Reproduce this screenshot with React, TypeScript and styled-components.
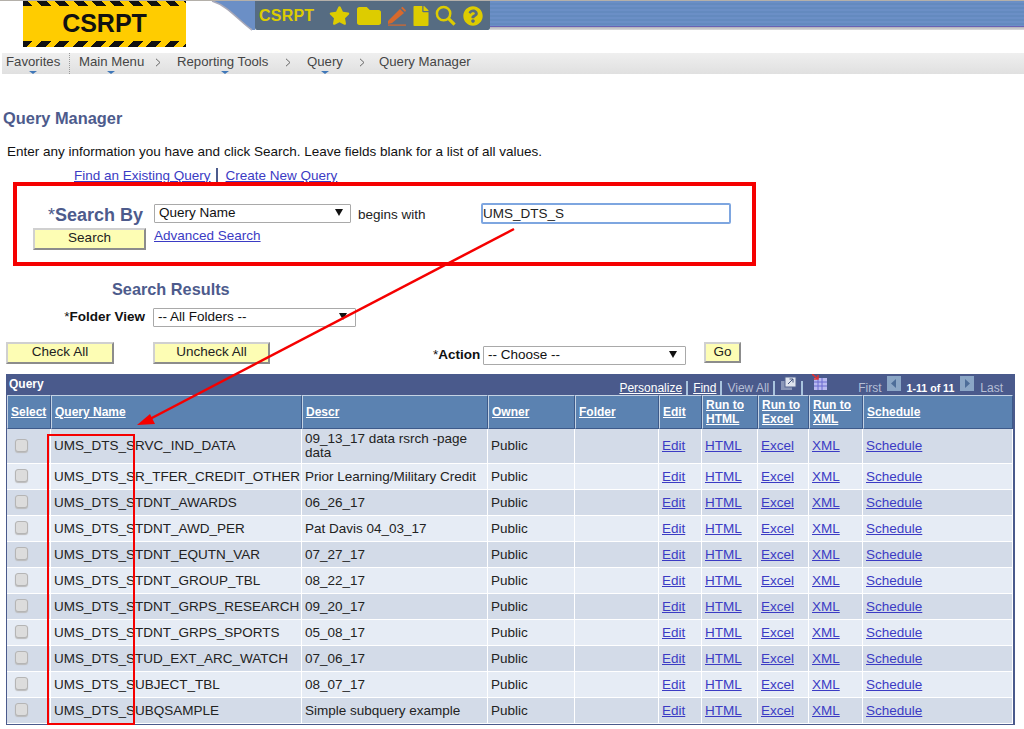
import React from 'react'
import styled, { createGlobalStyle } from 'styled-components'
import { FaStar, FaFolder, FaFile, FaQuestionCircle } from 'react-icons/fa'

const GlobalStyle = createGlobalStyle`
  html, body {
    margin: 0;
    padding: 0;
    background: #fff;
    font-family: "Liberation Sans", Arial, sans-serif;
    overflow: hidden;
  }
`

const Page = styled.div`
  position: relative;
  width: 1024px;
  height: 729px;
  box-sizing: border-box;
  border-top: 1px solid #b4b0aa;
  overflow: hidden;
`

const Header = styled.div`
  display: flex;
  align-items: flex-start;
  height: 46px;
  padding-left: 23px;
`

const Logo = styled.div`
  width: 163px;
  height: 46px;
  flex: none;
  display: flex;
  flex-direction: column;
  background: #ffcc00;
  &::before {
    content: '';
    height: 5px;
    flex: none;
    background: repeating-linear-gradient(45deg, #111 0 7px, #ffcc00 7px 13px);
  }
  &::after {
    content: '';
    height: 6px;
    flex: none;
    background: repeating-linear-gradient(135deg, #111 0 7px, #ffcc00 7px 13px);
  }
`

const LogoText = styled.div`
  flex: 1;
  display: flex;
  align-items: center;
  justify-content: center;
  font-size: 25px;
  font-weight: bold;
  color: #111;
`

const Swoosh = styled.svg`
  width: 69px;
  height: 30px;
  flex: none;
  display: block;
`

const Toolbar = styled.div`
  width: 235px;
  height: 29px;
  flex: none;
  display: flex;
  align-items: center;
  background: #566c82;
  border-radius: 0 0 2px 2px;
  padding-left: 4px;
  box-sizing: border-box;
  color: #ddcc00;
`

const ToolbarName = styled.span`
  font-size: 16px;
  font-weight: bold;
  width: 68px;
  flex: none;
  letter-spacing: 0.2px;
`

const ToolIcon = styled.span<{ $w: number; $color?: string }>`
  width: ${({ $w }) => $w}px;
  flex: none;
  display: flex;
  justify-content: center;
  align-items: center;
  color: ${({ $color }) => $color || '#ddcc00'};
`

const Band = styled.div`
  flex: 1;
  height: 29px;
  background:
    linear-gradient(to bottom, transparent 0 25px, #6a62b4 25px 26px, #b0b0b8 26px, #dcdcdc 29px),
    repeating-linear-gradient(to bottom, #6b8fc6 0 2px, #648abf 2px 4px);
`

const NavBar = styled.div`
  display: flex;
  align-items: center;
  height: 21px;
  margin: 6px 0 0 2px;
  background: linear-gradient(to bottom, #efefef, #e0e0e0);
  font-size: 13.2px;
  color: #454545;
`

const NavItem = styled.span<{ $w: number; $pad: number; $arrow?: number; $divider?: boolean }>`
  position: relative;
  display: flex;
  align-items: center;
  height: 100%;
  width: ${({ $w }) => $w}px;
  box-sizing: border-box;
  padding: 0 5px 5px ${({ $pad }) => $pad}px;
  flex: none;
  white-space: nowrap;
  ${({ $divider }) => $divider && 'border-right: 1px dotted #999;'}
  ${({ $arrow }) =>
    $arrow !== undefined &&
    `&::after {
      content: '';
      position: absolute;
      bottom: 0;
      left: ${$arrow}px;
      border-left: 4px solid transparent;
      border-right: 4px solid transparent;
      border-top: 3px solid #3f77b8;
    }`}
`

const NavChevron = styled.svg`
  margin-left: auto;
  margin-top: 3px;
  flex: none;
`

const Title = styled.h1`
  margin: 34px 0 0 3px;
  height: 20px;
  line-height: 20px;
  font-size: 16.4px;
  font-weight: bold;
  color: #4d5b8c;
`

const Instruction = styled.p`
  margin: 16px 0 0 7px;
  height: 16px;
  line-height: 16px;
  font-size: 13.5px;
  color: #111;
`

const LinkRow = styled.div`
  display: flex;
  align-items: center;
  height: 16px;
  margin: 7px 0 0 74px;
  font-size: 13.5px;
  color: #333;
`

const TextLink = styled.a`
  color: #3b3bc4;
  text-decoration: underline;
`

const AdvancedLink = styled(TextLink)`
  margin: 0 0 8px 8px;
  font-size: 13.5px;
`

const Pipe = styled.span`
  width: 2px;
  height: 14px;
  margin: 0 8px 0 5px;
  background: #4d5b8c;
`

const Row = styled.div<{ $top: number; $h: number; $align?: string }>`
  display: flex;
  align-items: ${({ $align }) => $align || 'center'};
  height: ${({ $h }) => $h}px;
  margin-top: ${({ $top }) => $top}px;
`

const SearchLabel = styled.label`
  width: 143px;
  margin-right: 11px;
  text-align: right;
  font-size: 18px;
  font-weight: bold;
  color: #4d5b8c;
  padding-top: 2px;
  white-space: nowrap;
  & > i {
    font-style: normal;
    font-weight: normal;
  }
`

const SelectWrap = styled.div<{ $w: number; $top?: number; $arrowRight?: number }>`
  position: relative;
  width: ${({ $w }) => $w}px;
  height: 19px;
  margin-top: ${({ $top }) => $top || 0}px;
  flex: none;
  &::after {
    content: '';
    position: absolute;
    top: 6px;
    right: ${({ $arrowRight }) => $arrowRight || 8}px;
    border-left: 4px solid transparent;
    border-right: 4px solid transparent;
    border-top: 7px solid #111;
    pointer-events: none;
  }
`

const Select = styled.select`
  appearance: none;
  width: 100%;
  height: 100%;
  box-sizing: border-box;
  border: 1px solid #a9a9a9;
  border-radius: 1px;
  background: #fff;
  padding: 0 0 2px 4px;
  font-family: "Liberation Sans", Arial, sans-serif;
  font-size: 13.5px;
  color: #111;
`

const BeginsWith = styled.span`
  width: 123px;
  margin-left: 7px;
  font-size: 13.5px;
  color: #222;
  padding-top: 4px;
`

const TextInput = styled.input`
  width: 250px;
  height: 21px;
  box-sizing: border-box;
  border: 2px solid #7ea6e0;
  border-radius: 2px;
  padding: 0 0 1px 0;
  font-family: "Liberation Sans", Arial, sans-serif;
  font-size: 13.5px;
  color: #222;
  outline: none;
`

const Button = styled.button<{ $w: number; $ml: number; $h?: number }>`
  width: ${({ $w }) => $w}px;
  height: ${({ $h }) => $h || 22}px;
  margin-left: ${({ $ml }) => $ml}px;
  flex: none;
  box-sizing: border-box;
  padding: 0 0 3px;
  background: #fdfdb4;
  border-style: solid;
  border-width: 2px;
  border-color: #d0d0d0 #8c8c8c #8c8c8c #d0d0d0;
  font-family: "Liberation Sans", Arial, sans-serif;
  font-size: 13.5px;
  color: #222;
`

const SubTitle = styled.h2`
  margin: 29px 0 0 112px;
  height: 20px;
  line-height: 20px;
  font-size: 16.3px;
  font-weight: bold;
  color: #4d5b8c;
`

const FieldLabel = styled.label<{ $w: number; $mr: number; $ml?: number; $top?: number }>`
  width: ${({ $w }) => $w}px;
  margin-right: ${({ $mr }) => $mr}px;
  margin-left: ${({ $ml }) => $ml || 0}px;
  padding-top: ${({ $top }) => $top || 0}px;
  flex: none;
  text-align: right;
  font-size: 13.5px;
  font-weight: bold;
  color: #111;
  white-space: nowrap;
  & > i {
    font-style: normal;
    font-weight: normal;
  }
`

const Frame = styled.div`
  width: 1009px;
  margin: 10px 0 0 6px;
  box-sizing: border-box;
  border: 1px solid #4a5a8c;
  border-top: 0;
  border-right-width: 2px;
`

const TitleBar = styled.div`
  display: flex;
  align-items: flex-end;
  height: 21px;
  background: #4a5a8c;
  color: #fff;
  font-size: 12px;
`

const TitleName = styled.span`
  font-weight: bold;
  padding: 0 0 4px 2px;
`

const PagerGroup = styled.div`
  margin-left: auto;
  display: flex;
  align-items: flex-end;
  padding: 0 10px 0 0;
  height: 100%;
  box-sizing: border-box;
`

const PagerLink = styled.a`
  color: #fff;
  text-decoration: underline;
`

const PagerMuted = styled.span<{ $ml?: number }>`
  color: #b6bfd6;
  margin-left: ${({ $ml }) => $ml || 0}px;
`

const PagerPipe = styled.span`
  width: 2px;
  height: 14px;
  margin: 0 5px 0 4px;
  background: #a9c4de;
  flex: none;
`

const PagerIcon = styled.svg<{ $ml?: number }>`
  flex: none;
  display: block;
  margin: 0 0 4px ${({ $ml }) => $ml || 0}px;
`

const PagerCount = styled.b`
  margin: 0 6px;
  color: #fff;
  font-size: 10.6px;
  line-height: 14px;
`

const Grid = styled.table`
  width: 1006px;
  table-layout: fixed;
  border-collapse: separate;
  border-spacing: 0;
  font-size: 13.5px;
`

const Head = styled.th`
  height: 34px;
  padding: 0 0 0 3px;
  box-sizing: border-box;
  background: #5b82b1;
  border-top: 1px solid #c5d3e4;
  border-left: 1px solid #c5d3e4;
  border-right: 1px solid #3d5a8a;
  border-bottom: 1px solid #3d5a8a;
  text-align: left;
  vertical-align: middle;
  font-size: 12px;
  line-height: 14px;
  font-weight: bold;
`

const HeadLink = styled.a`
  color: #fff;
  text-decoration: underline;
`

const DataRow = styled.tr<{ $odd: boolean; $h: number }>`
  height: ${({ $h }) => $h}px;
  background: ${({ $odd }) => ($odd ? '#d3dbe8' : '#e6ecf5')};
`

const Cell = styled.td`
  padding: 0 2px 0 3px;
  box-sizing: border-box;
  border-right: 1px solid #fff;
  border-bottom: 1px solid #fff;
  vertical-align: middle;
  color: #222;
  line-height: 14px;
`

const NameCell = styled(Cell)`
  white-space: nowrap;
`

const Check = styled.input.attrs({ type: 'checkbox', disabled: true })`
  appearance: none;
  display: block;
  width: 13px;
  height: 13px;
  margin: 0 0 2px 5px;
  box-sizing: border-box;
  border: 1px solid #b5b5b5;
  border-radius: 3px;
  background: #dcdcdc;
  box-shadow: 0 1px 1px #bbb;
`

const RowLink = styled.a`
  color: #3b3bc4;
  text-decoration: underline;
`

const RedBox = styled.div<{ $x: number; $y: number; $w: number; $h: number; $b: number }>`
  position: absolute;
  left: ${({ $x }) => $x}px;
  top: ${({ $y }) => $y}px;
  width: ${({ $w }) => $w}px;
  height: ${({ $h }) => $h}px;
  box-sizing: border-box;
  border: ${({ $b }) => $b}px solid #f50000;
  pointer-events: none;
`

const ArrowLayer = styled.svg`
  position: absolute;
  left: 0;
  top: -1px;
  pointer-events: none;
`

const columns = [44, 251, 186, 87, 84, 43, 56, 51, 54, 150]

const headers: React.ReactNode[] = [
  'Select',
  'Query Name',
  'Descr',
  'Owner',
  'Folder',
  'Edit',
  <>Run to<br />HTML</>,
  <>Run to<br />Excel</>,
  <>Run to<br />XML</>,
  'Schedule',
]

const rows = [
  ['UMS_DTS_SRVC_IND_DATA', '09_13_17 data rsrch -page data'],
  ['UMS_DTS_SR_TFER_CREDIT_OTHER', 'Prior Learning/Military Credit'],
  ['UMS_DTS_STDNT_AWARDS', '06_26_17'],
  ['UMS_DTS_STDNT_AWD_PER', 'Pat Davis 04_03_17'],
  ['UMS_DTS_STDNT_EQUTN_VAR', '07_27_17'],
  ['UMS_DTS_STDNT_GROUP_TBL', '08_22_17'],
  ['UMS_DTS_STDNT_GRPS_RESEARCH', '09_20_17'],
  ['UMS_DTS_STDNT_GRPS_SPORTS', '05_08_17'],
  ['UMS_DTS_STUD_EXT_ARC_WATCH', '07_06_17'],
  ['UMS_DTS_SUBJECT_TBL', '08_07_17'],
  ['UMS_DTS_SUBQSAMPLE', 'Simple subquery example'],
]

const Chevron = () => (
  <NavChevron width="6" height="9" viewBox="0 0 6 9">
    <path d="M1 .8L5 4.5L1 8.2" fill="none" stroke="#666" strokeWidth="1" />
  </NavChevron>
)

const App: React.FC = () => (
  <Page>
    <GlobalStyle />
    <Header>
      <Logo>
        <LogoText>CSRPT</LogoText>
      </Logo>
      <Swoosh viewBox="0 0 69 30">
        <path d="M26 0C42 5 52 19 66 29H69V0Z" fill="#6b8fc6" />
        <path d="M26 0C42 5 52 19 66 29" fill="none" stroke="#a9a9b8" strokeWidth="1.6" />
      </Swoosh>
      <Toolbar>
        <ToolbarName>CSRPT</ToolbarName>
        <ToolIcon $w={25}><FaStar size={21} /></ToolIcon>
        <ToolIcon $w={33}><FaFolder size={24} /></ToolIcon>
        <ToolIcon $w={23} $color="#d8692c">
          <svg width="20" height="20" viewBox="0 0 20 20">
            <path d="M1 15L13 3L17 7L5 17L1 18Z" fill="currentColor" />
            <path d="M14 2L15.5 .8L19 4.5L18 6Z" fill="currentColor" />
            <rect x="1" y="18.5" width="18" height="1.2" fill="currentColor" />
          </svg>
        </ToolIcon>
        <ToolIcon $w={25}><FaFile size={20} /></ToolIcon>
        <ToolIcon $w={24}>
          <svg width="21" height="21" viewBox="0 0 22 22" fill="none" stroke="currentColor">
            <circle cx="9" cy="9" r="7" strokeWidth="2.6" />
            <path d="M14 14L20.5 20.5" strokeWidth="3.4" />
          </svg>
        </ToolIcon>
        <ToolIcon $w={32}><FaQuestionCircle size={20} /></ToolIcon>
      </Toolbar>
      <Band />
    </Header>

    <NavBar>
      <NavItem $w={68} $pad={4} $arrow={27} $divider>Favorites</NavItem>
      <NavItem $w={96} $pad={9} $arrow={37}>Main Menu<Chevron /></NavItem>
      <NavItem $w={130} $pad={11} $arrow={55}>Reporting Tools<Chevron /></NavItem>
      <NavItem $w={74} $pad={11} $arrow={25}>Query<Chevron /></NavItem>
      <NavItem $w={120} $pad={9}>Query Manager</NavItem>
    </NavBar>

    <Title>Query Manager</Title>
    <Instruction>Enter any information you have and click Search. Leave fields blank for a list of all values.</Instruction>
    <LinkRow>
      <TextLink>Find an Existing Query</TextLink>
      <Pipe />
      <TextLink>Create New Query</TextLink>
    </LinkRow>

    <Row $top={20} $h={21} $align="flex-start">
      <SearchLabel><i>*</i>Search By</SearchLabel>
      <SelectWrap $w={197}>
        <Select defaultValue="name"><option value="name">Query Name</option></Select>
      </SelectWrap>
      <BeginsWith>begins with</BeginsWith>
      <TextInput defaultValue="UMS_DTS_S" />
    </Row>
    <Row $top={4} $h={22}>
      <Button $w={113} $ml={33}>Search</Button>
      <AdvancedLink>Advanced Search</AdvancedLink>
    </Row>

    <SubTitle>Search Results</SubTitle>
    <Row $top={8} $h={19}>
      <FieldLabel $w={145} $mr={8}><i>*</i>Folder View</FieldLabel>
      <SelectWrap $w={203} $arrowRight={9}>
        <Select defaultValue="all"><option value="all">-- All Folders --</option></Select>
      </SelectWrap>
    </Row>

    <Row $top={16} $h={22} $align="flex-start">
      <Button $w={108} $ml={6}>Check All</Button>
      <Button $w={117} $ml={39}>Uncheck All</Button>
      <FieldLabel $w={47} $mr={3} $ml={163} $top={5}><i>*</i>Action</FieldLabel>
      <SelectWrap $w={203} $top={3} $arrowRight={9}>
        <Select defaultValue="choose"><option value="choose">-- Choose --</option></Select>
      </SelectWrap>
      <Button $w={37} $ml={18} $h={21}>Go</Button>
    </Row>

    <Frame>
      <TitleBar>
        <TitleName>Query</TitleName>
        <PagerGroup>
          <PagerLink>Personalize</PagerLink>
          <PagerPipe />
          <PagerLink>Find</PagerLink>
          <PagerPipe />
          <PagerMuted>View All</PagerMuted>
          <PagerPipe />
          <PagerIcon width="16" height="15" viewBox="0 0 16 15" $ml={1}>
            <rect x="0" y="5" width="11" height="9" fill="#8a97b8" />
            <rect x="4" y="1" width="11" height="10" fill="#dfe4ee" stroke="#55658f" />
            <path d="M7 8L12 3M8.5 3H12V6.5" stroke="#44547f" fill="none" />
          </PagerIcon>
          <PagerPipe />
          <PagerIcon width="15" height="17" viewBox="0 0 15 17" $ml={4}>
            <rect x="2" y="4" width="13" height="12" fill="#b9b9f0" />
            <path d="M2 8H15M2 12H15M6 4V16M10 4V16" stroke="#6b6bd0" strokeWidth="1" />
            <path d="M0 0L6 5M6 1V5H2" stroke="#e03030" strokeWidth="1.5" fill="none" />
          </PagerIcon>
          <PagerMuted $ml={31}>First</PagerMuted>
          <PagerIcon width="14" height="15" viewBox="0 0 14 15" $ml={5}>
            <rect width="14" height="15" fill="#8ba6c6" />
            <path d="M9 3V12L4 7.5Z" fill="#4d6d99" />
          </PagerIcon>
          <PagerCount>1-11 of 11</PagerCount>
          <PagerIcon width="14" height="15" viewBox="0 0 14 15">
            <rect width="14" height="15" fill="#8ba6c6" />
            <path d="M5 3V12L10 7.5Z" fill="#4d6d99" />
          </PagerIcon>
          <PagerMuted $ml={6}>Last</PagerMuted>
        </PagerGroup>
      </TitleBar>
      <Grid>
        <colgroup>
          {columns.map((w, i) => <col key={i} width={w} />)}
        </colgroup>
        <thead>
          <tr>
            {headers.map((h, i) => <Head key={i}><HeadLink>{h}</HeadLink></Head>)}
          </tr>
        </thead>
        <tbody>
          {rows.map(([name, descr], i) => (
            <DataRow key={name} $odd={i % 2 === 0} $h={i === 0 ? 35 : 26}>
              <Cell><Check /></Cell>
              <NameCell>{name}</NameCell>
              <Cell>{descr}</Cell>
              <Cell>Public</Cell>
              <Cell />
              <Cell><RowLink>Edit</RowLink></Cell>
              <Cell><RowLink>HTML</RowLink></Cell>
              <Cell><RowLink>Excel</RowLink></Cell>
              <Cell><RowLink>XML</RowLink></Cell>
              <Cell><RowLink>Schedule</RowLink></Cell>
            </DataRow>
          ))}
        </tbody>
      </Grid>
    </Frame>

    <RedBox $x={13} $y={181} $w={743} $h={84} $b={4} />
    <RedBox $x={47} $y={433} $w={88} $h={291} $b={2} />
    <ArrowLayer width="1024" height="729" viewBox="0 0 1024 729">
      <path d="M514 229L148 420" stroke="#f50000" strokeWidth="2.5" fill="none" />
      <path d="M137 425L150 414L155 424Z" fill="#f50000" />
    </ArrowLayer>
  </Page>
)

export default App
